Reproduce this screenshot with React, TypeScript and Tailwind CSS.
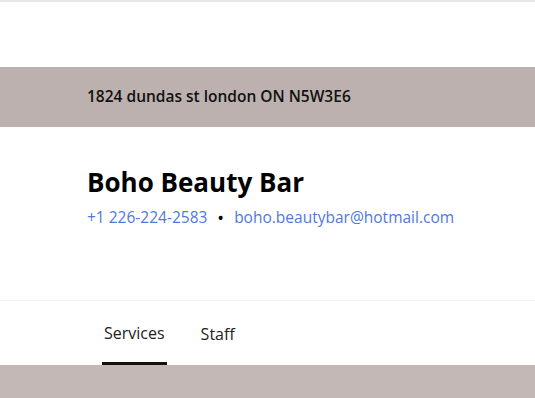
import React from "react";

const font = { fontFamily: "'Open Sans', Lato, sans-serif" };

export default function App() {
    return (
        <div className="w-[535px] h-[398px] overflow-hidden bg-white" style={font}>
            <div className="h-[67px] border-t-2 border-[#e6e6e6]"></div>
            <div className="h-[60px] bg-[#bcb1af] flex items-center px-[87px]">
                <p className="text-[15.5px] font-semibold text-[#111111]">1824 dundas st london ON N5W3E6</p>
            </div>
            <div className="h-[173px] px-[87px] pt-[38px]">
                <h1 className="text-[26px] font-bold text-black leading-[34px]">Boho Beauty Bar</h1>
                <div className="flex items-center whitespace-nowrap text-[15.5px] text-[#4f78e0] mt-[7px]">
                    <span className="shrink-0">+1 226-224-2583</span>
                    <span className="shrink-0 text-black mx-[10px] text-[18px] leading-none">•</span>
                    <span className="shrink-0">boho.beautybar@hotmail.com</span>
                </div>
            </div>
            <div className="h-[65px] border-t border-[#f3f3f3] flex px-[102px]">
                <div className="flex flex-col justify-end">
                    <div className="flex-1 flex items-center px-[2px] pt-[3px] text-[16px] text-[#222222]">Services</div>
                    <div className="h-[3px] bg-[#111111]"></div>
                </div>
                <div className="flex items-center ml-[34px] pt-[1px] text-[16px] text-[#222222]">Staff</div>
            </div>
            <div className="h-[40px] bg-[#c4b8b6]"></div>
        </div>
    )
}
